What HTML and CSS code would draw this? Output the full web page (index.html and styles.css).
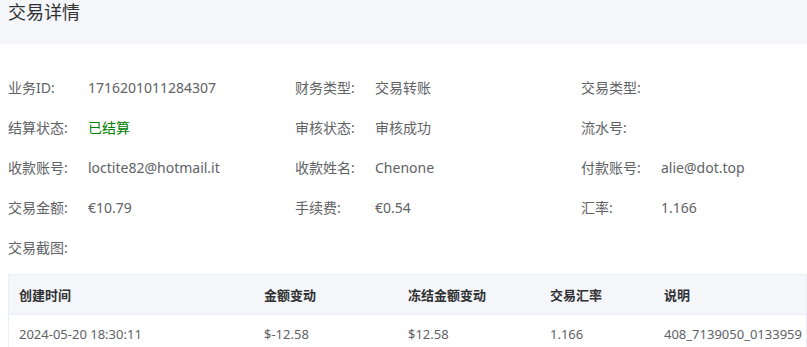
FILE: index.html
```html
<!DOCTYPE html>
<html>
<head>
    <title>交易详情</title>
    <link rel="stylesheet" href="styles.css">
</head>
<body>
    <div class="page-head">
        <h2>交易详情</h2>
    </div>

    <div class="detail">
        <div class="info-grid">
            <div class="item"><span class="label">业务ID:</span><span class="value">1716201011284307</span></div>
            <div class="item"><span class="label">财务类型:</span><span class="value">交易转账</span></div>
            <div class="item"><span class="label">交易类型:</span><span class="value"></span></div>

            <div class="item"><span class="label">结算状态:</span><span class="value status-ok">已结算</span></div>
            <div class="item"><span class="label">审核状态:</span><span class="value">审核成功</span></div>
            <div class="item"><span class="label">流水号:</span><span class="value"></span></div>

            <div class="item"><span class="label">收款账号:</span><span class="value">loctite82@hotmail.it</span></div>
            <div class="item"><span class="label">收款姓名:</span><span class="value">Chenone</span></div>
            <div class="item"><span class="label">付款账号:</span><span class="value">alie@dot.top</span></div>

            <div class="item"><span class="label">交易金额:</span><span class="value">€10.79</span></div>
            <div class="item"><span class="label">手续费:</span><span class="value">€0.54</span></div>
            <div class="item"><span class="label">汇率:</span><span class="value">1.166</span></div>

            <div class="item"><span class="label">交易截图:</span><span class="value"></span></div>
        </div>

        <table class="log-table">
            <thead>
                <tr>
                    <th class="col-time">创建时间</th>
                    <th class="col-amount">金额变动</th>
                    <th class="col-frozen">冻结金额变动</th>
                    <th class="col-rate">交易汇率</th>
                    <th>说明</th>
                </tr>
            </thead>
            <tbody>
                <tr>
                    <td>2024-05-20 18:30:11</td>
                    <td>$-12.58</td>
                    <td>$12.58</td>
                    <td>1.166</td>
                    <td>408_7139050_0133959</td>
                </tr>
            </tbody>
        </table>
    </div>
</body>
</html>
```

FILE: styles.css
```css
body {
    font-family: 'Noto Sans', 'Noto Sans CJK SC', sans-serif;
    margin: 0;
    color: #606266;
    background: #fff;
    overflow: hidden;
}

.page-head {
    background: #f5f6fa;
    height: 44px;
    padding: 0 8px;
}

.page-head h2 {
    margin: 0;
    font-size: 18px;
    font-weight: normal;
    line-height: 25px;
    color: #303133;
}

.detail {
    padding: 24px 0 0 8px;
}

.info-grid {
    display: grid;
    grid-template-columns: 287px 286px 1fr;
}

.item {
    display: flex;
    font-size: 14px;
    line-height: 40px;
    white-space: nowrap;
}

.label {
    width: 80px;
    flex-shrink: 0;
}

.status-ok {
    color: #008000;
}

.log-table {
    margin-top: 6px;
    width: 799px;
    table-layout: fixed;
    border-collapse: collapse;
    border: 1px solid #ebeef5;
    border-bottom: none;
    font-size: 13px;
    text-align: left;
}

.log-table th {
    background: #f5f6fa;
    color: #303133;
    font-weight: bold;
    height: 39px;
    padding: 0 10px;
    border-bottom: 1px solid #ebeef5;
}

.log-table td {
    height: 38px;
    padding: 0 10px;
    white-space: nowrap;
}

.col-time { width: 225px; }
.col-amount { width: 124px; }
.col-frozen { width: 122px; }
.col-rate { width: 94px; }
```
